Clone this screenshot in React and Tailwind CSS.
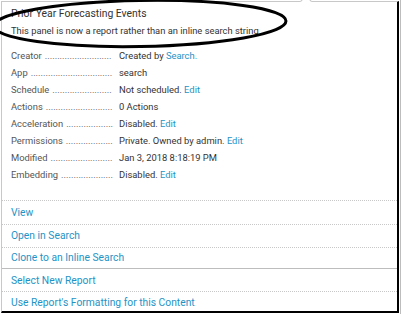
import React, { useLayoutEffect, useRef, useState } from "react";

const rows = [
  ["Creator", [["t", "Created by "], ["a", "Search."]]],
  ["App", [["t", "search"]]],
  ["Schedule", [["t", "Not scheduled. "], ["a", "Edit"]]],
  ["Actions", [["t", "0 Actions"]]],
  ["Acceleration", [["t", "Disabled. "], ["a", "Edit"]]],
  ["Permissions", [["t", "Private. Owned by admin. "], ["a", "Edit"]]],
  ["Modified", [["t", "Jan 3, 2018 8:18:19 PM"]]],
  ["Embedding", [["t", "Disabled. "], ["a", "Edit"]]],
];

function Label({ text }) {
  const labelRef = useRef(null);
  const dotRef = useRef(null);
  const [count, setCount] = useState(0);
  useLayoutEffect(() => {
    const lw = labelRef.current.getBoundingClientRect().width;
    const dw = dotRef.current.getBoundingClientRect().width / 10;
    const n = Math.max(0, Math.floor((103 - lw - 3) / dw));
    setCount(n);
  }, []);
  return (
    <div className="relative w-[103px] flex whitespace-nowrap text-[#555]">
      <span ref={labelRef}>{text}</span>
      <span className="ml-[3px]">{".".repeat(count)}</span>
      <span ref={dotRef} className="absolute invisible left-0 top-0">..........</span>
    </div>
  );
}

export default function App() {
  return (
    <div
      className="relative w-[402px] h-[314px] bg-white flex overflow-hidden"
      style={{ fontFamily: "Roboto, 'Liberation Sans', sans-serif" }}
    >
      <div className="relative ml-px mt-px w-[398px] h-[312px] border-t border-l border-[#c8c8c8] border-r-2 border-r-black border-b-2 border-b-black flex flex-col">
        {/* caret */}
        <div className="absolute left-[300px] top-[-5px] w-[8px] h-[8px] rotate-45 bg-white border-t border-l border-[#c8c8c8]" />
        <div className="pl-[9px] pt-[4px]">
          <div className="text-[10.4px] leading-[16px] text-[#333]">Prior Year Forecasting Events</div>
          <div className="text-[9.35px] leading-[16px] text-[#333] mt-px">
            This panel is now a report rather than an inline search string
          </div>
        </div>
        <div className="pl-[9px] mt-[8px] flex flex-col">
          {rows.map(([label, parts]) => (
            <div key={label} className="flex h-[17px] items-center text-[9.4px] leading-[17px]">
              <Label text={label} />
              <div className="ml-[5px] whitespace-nowrap text-[#333]">
                {parts.map(([k, s], i) =>
                  k === "a" ? (
                    <span key={i} className="text-[#1e93c6]">{s}</span>
                  ) : (
                    <span key={i}>{s}</span>
                  )
                )}
              </div>
            </div>
          ))}
        </div>
        <div className="mt-auto flex flex-col text-[10.3px] text-[#1e93c6]">
          <div className="border-t border-dotted border-[#c8c8c8] h-[24px] pl-[9px] flex items-center">View</div>
          <div className="border-t border-dotted border-[#c8c8c8] h-[23px] pl-[9px] flex items-center">Open in Search</div>
          <div className="border-t border-dotted border-[#c8c8c8] h-[21px] pl-[9px] flex items-center">Clone to an Inline Search</div>
          <div className="border-t border-[#bdbdbd] h-[23px] pl-[9px] flex items-center pt-px">Select New Report</div>
          <div className="border-t border-dotted border-[#c8c8c8] h-[20px] pl-[9px] flex items-center pt-[3px]">Use Report's Formatting for this Content</div>
        </div>
      </div>
      <div className="ml-px w-px h-full bg-[#bdbdbd]" />
      {/* annotation ellipse */}
      <svg className="absolute left-0 top-0 pointer-events-none" width="402" height="60">
        <ellipse cx="140" cy="23.5" rx="146" ry="23" fill="none" stroke="black" strokeWidth="3" transform="rotate(-1 140 23.5)" />
      </svg>
    </div>
  );
}
